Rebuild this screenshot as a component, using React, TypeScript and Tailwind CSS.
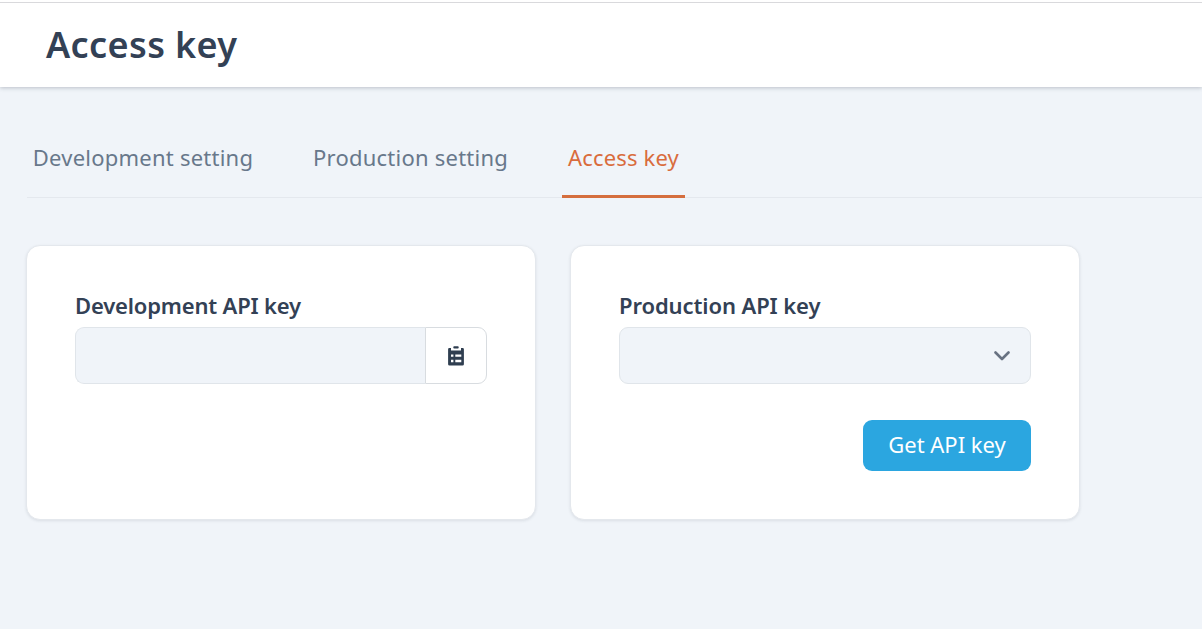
import type { ReactNode } from "react";

function ClipboardListIcon() {
  return (
    <svg className="h-5 w-4" viewBox="0 0 16 20" fill="none">
      <path d="M1.300 2H3v2.600h10V2h1.700a1.200 1.200 0 0 1 1.200 1.200v15a1.400 1.400 0 0 1-1.400 1.400h-13A1.400 1.400 0 0 1 .1 18.200v-15A1.200 1.200 0 0 1 1.300 2Z" fill="#2f3e50" />
      <rect x="5.300" y="0.300" width="5.400" height="2.200" rx="0.900" fill="#2f3e50" />
      <path d="M3 9.700h2.400M3 15h2.400M7.300 9.700h6M7.300 15h6" stroke="#fff" strokeWidth="2.300" />
    </svg>
  );
}

function ChevronIcon() {
  return (
    <svg className="h-[10px] w-4" viewBox="0 0 16 10" fill="none">
      <path d="m1.500 1.500 6.500 6.500 6.500-6.500" stroke="#687282" strokeWidth="2.600" strokeLinecap="round" strokeLinejoin="round" />
    </svg>
  );
}

function Card({ children }: { children: ReactNode }) {
  return (
    <section className="flex h-[275px] w-[510px] flex-col rounded-[14px] border border-[#e4e8ed] bg-white px-12 pt-[46px] shadow-[0_1px_3px_rgba(30,41,59,0.1)]">
      {children}
    </section>
  );
}

export default function App() {
  return (
    <div className="h-[629px] overflow-hidden bg-[#f0f4f9] font-['Noto_Sans',sans-serif] text-[22px] text-[#334155]">
      <header className="h-[87px] bg-white pt-[2px] shadow-[0_1px_4px_rgba(30,41,59,0.25)]">
        <div className="flex h-[85px] items-center border-t border-[#d9d9dc] pl-[46px]">
          <h1 className="text-[36px] leading-[48px] font-semibold tracking-[0.4px] whitespace-nowrap">Access key</h1>
        </div>
      </header>
      <nav className="mt-[34px] ml-[27px] flex h-[77px] gap-[48px] border-b border-[#e4e8ee] text-[#68788b]">
        <button className="-mb-px h-[77px] w-[232px] pb-[4px] tracking-[0.23px] whitespace-nowrap">Development setting</button>
        <button className="-mb-px h-[77px] w-[207px] pb-[4px] tracking-[0.23px] whitespace-nowrap">Production setting</button>
        <button className="-mb-px h-[77px] w-[123px] border-b-3 border-[#d56e3e] pb-px tracking-[0.15px] whitespace-nowrap text-[#d96c3d]">Access key</button>
      </nav>
      <main className="mt-[47px] ml-[26px] flex gap-[34px]">
        <Card>
          <label className="h-[35px] leading-[26px] font-semibold tracking-[-0.18px]">Development API key</label>
          <div className="flex h-[57px] w-[412px]">
            <input aria-label="Development API key" readOnly className="w-[350px] rounded-l-[9px] border border-r-0 border-[#e0e5ea] bg-[#f0f4f9] outline-none" />
            <button aria-label="Copy" className="flex w-[62px] items-center justify-center rounded-r-[9px] border border-[#d8dce0] bg-white">
              <ClipboardListIcon />
            </button>
          </div>
        </Card>
        <Card>
          <label className="h-[35px] leading-[26px] font-semibold tracking-[-0.1px]">Production API key</label>
          <button aria-label="Production API key" className="flex h-[57px] w-[412px] shrink-0 items-center justify-end rounded-[9px] border border-[#e0e5ea] bg-[#f0f4f9] pr-5">
            <ChevronIcon />
          </button>
          <button className="mt-9 h-[51px] w-[168px] self-end rounded-[9px] bg-[#2ba6e0] pb-[2px] whitespace-nowrap text-white">Get API key</button>
        </Card>
      </main>
    </div>
  );
}
